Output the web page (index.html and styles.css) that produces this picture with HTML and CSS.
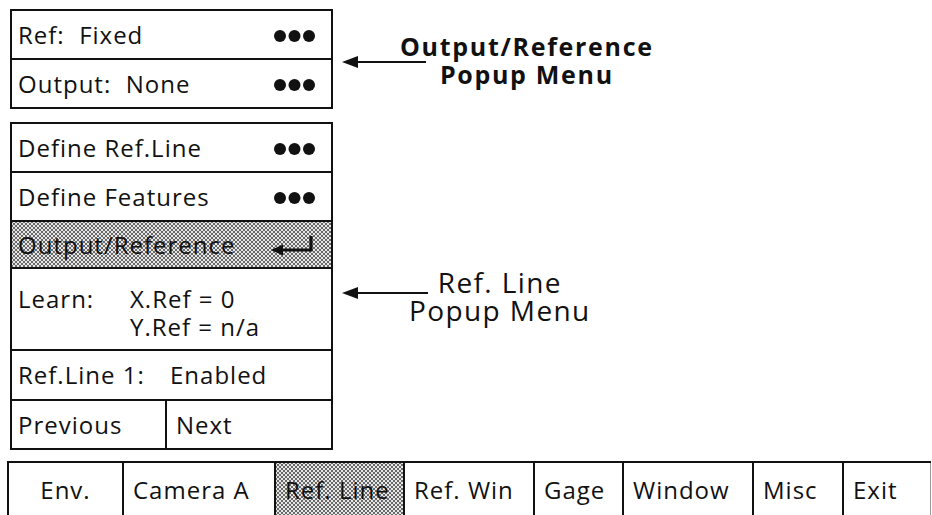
FILE: index.html
```html
<!DOCTYPE html>
<html lang="en">
<head>
    <meta charset="UTF-8">
    <title>Ref. Line Popup Menu</title>
    <link rel="stylesheet" href="styles.css">
</head>
<body>
    <div class="top">
        <div class="menus">
            <div class="menu">
                <div class="row">
                    <span>Ref:&nbsp; Fixed</span>
                    <svg class="dots" width="42" height="12" viewBox="0 0 42 12"><circle cx="6" cy="6" r="6"/><circle cx="20.5" cy="6" r="6"/><circle cx="35" cy="6" r="6"/></svg>
                </div>
                <div class="row">
                    <span>Output:&nbsp; None</span>
                    <svg class="dots" width="42" height="12" viewBox="0 0 42 12"><circle cx="6" cy="6" r="6"/><circle cx="20.5" cy="6" r="6"/><circle cx="35" cy="6" r="6"/></svg>
                </div>
            </div>

            <div class="menu menu-ref">
                <div class="row">
                    <span>Define Ref.Line</span>
                    <svg class="dots" width="42" height="12" viewBox="0 0 42 12"><circle cx="6" cy="6" r="6"/><circle cx="20.5" cy="6" r="6"/><circle cx="35" cy="6" r="6"/></svg>
                </div>
                <div class="row">
                    <span>Define Features</span>
                    <svg class="dots" width="42" height="12" viewBox="0 0 42 12"><circle cx="6" cy="6" r="6"/><circle cx="20.5" cy="6" r="6"/><circle cx="35" cy="6" r="6"/></svg>
                </div>
                <div class="row row-short shaded">
                    <span>Output/Reference</span>
                    <svg class="enter" width="44" height="24" viewBox="0 0 44 24"><path d="M9 17 H40 V3" fill="none" stroke="#111" stroke-width="3.2"/><polygon points="0,17 12,11.5 12,22.5" fill="#111"/></svg>
                </div>
                <div class="row row-learn">
                    <span class="learn-label">Learn:</span>
                    <span class="learn-vals">X.Ref = 0<br>Y.Ref = n/a</span>
                </div>
                <div class="row row-status">
                    <span class="status-label">Ref.Line 1:</span>
                    <span>Enabled</span>
                </div>
                <div class="row row-nav">
                    <span class="nav-btn">Previous</span>
                    <span class="nav-btn nav-next">Next</span>
                </div>
            </div>
        </div>

        <div class="callouts">
            <div class="callout callout-out">
                <svg class="pointer" width="84" height="14" viewBox="0 0 84 14"><polygon points="0,7 16,1 16,13" fill="#111"/><line x1="14" y1="7" x2="84" y2="7" stroke="#111" stroke-width="2"/></svg>
                <div class="callout-text bold">Output/Reference<br>Popup Menu</div>
            </div>
            <div class="callout callout-ref">
                <svg class="pointer" width="86" height="14" viewBox="0 0 86 14"><polygon points="0,7 16,1 16,13" fill="#111"/><line x1="14" y1="7" x2="86" y2="7" stroke="#111" stroke-width="2"/></svg>
                <div class="callout-text">Ref. Line<br>Popup Menu</div>
            </div>
        </div>
    </div>

    <div class="tabs">
        <div class="tab tab-env">Env.</div>
        <div class="tab">Camera A</div>
        <div class="tab shaded">Ref. Line</div>
        <div class="tab">Ref. Win</div>
        <div class="tab">Gage</div>
        <div class="tab">Window</div>
        <div class="tab">Misc</div>
        <div class="tab">Exit</div>
    </div>
</body>
</html>
```

FILE: styles.css
```css
body {
    margin: 0;
    padding-top: 9px;
    background: #fff;
    color: #111;
    font-family: "Open Sans", "Liberation Sans", sans-serif;
    font-size: 24px;
    letter-spacing: 1px;
    overflow: hidden;
}

.top {
    display: flex;
    padding-left: 10px;
}

.menus {
    width: 323px;
    flex: none;
}

.menu {
    border: 2px solid #111;
}

.menu-ref {
    margin-top: 13px;
}

.row {
    display: flex;
    align-items: center;
    justify-content: space-between;
    height: 47px;
    padding: 0 15px 0 6px;
    border-bottom: 2px solid #111;
    line-height: 28px;
}

.row:last-child {
    border-bottom: none;
}

.row-short {
    height: 45px;
}

.shaded {
    background:
        radial-gradient(circle, #666 0.7px, transparent 1.1px) 0 0 / 4px 4px,
        radial-gradient(circle, #666 0.7px, transparent 1.1px) 2px 2px / 4px 4px,
        #e6e6e6;
}

.dots {
    fill: #111;
    margin-top: 2px;
}

.enter {
    margin-right: 1px;
}

.row-learn {
    justify-content: flex-start;
    align-items: flex-start;
    padding-top: 16px;
    box-sizing: border-box;
    height: 82px;
}

.learn-label {
    width: 112px;
}

.row-status {
    height: 48px;
    justify-content: flex-start;
}

.status-label {
    width: 152px;
}

.row-nav {
    padding: 0;
    justify-content: flex-start;
    align-items: stretch;
}

.nav-btn {
    display: flex;
    align-items: center;
    width: 147px;
    padding-left: 6px;
}

.nav-next {
    border-left: 2px solid #111;
    padding-left: 9px;
}

.callouts {
    display: flex;
    flex-direction: column;
    padding-left: 9px;
}

.callout {
    display: flex;
    align-items: flex-start;
}

.callout-out {
    margin-top: 15px;
}

.callout-ref {
    margin-top: 167px;
}

.pointer {
    flex: none;
    margin-top: 31px;
}

.callout-text {
    text-align: center;
    font-size: 28px;
    line-height: 28px;
    letter-spacing: 1.4px;
}

.callout-out .callout-text {
    margin-left: -26px;
    margin-top: 8px;
}

.callout-ref .callout-text {
    margin-left: -19px;
    margin-top: 13px;
}

.bold {
    font-weight: 700;
    font-size: 25px;
    letter-spacing: 1.7px;
}

.tabs {
    display: grid;
    grid-template-columns: 115px 152px 129px 130px 89px 130px 90px 89px;
    margin: 11px 0 0 7px;
    width: 924px;
    height: 60px;
    border-top: 2px solid #111;
}

.tab {
    border-left: 2px solid #111;
    padding: 10px 0 0 9px;
}

.tab-env {
    text-align: center;
    padding-left: 0;
}

.tab:last-child {
    border-right: 1px solid #999;
}
```
